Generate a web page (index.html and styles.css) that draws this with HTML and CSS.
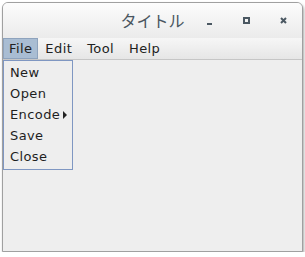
FILE: index.html
```html
<!DOCTYPE html>
<html lang="ja">
<head>
    <meta charset="UTF-8">
    <title>タイトル</title>
    <link rel="stylesheet" href="styles.css">
</head>
<body>
<div class="window">
    <div class="titlebar">
        <span class="title">タイトル</span>
        <div class="controls">
            <span class="btn"><span class="min"></span></span>
            <span class="btn"><span class="max"></span></span>
            <span class="btn"><svg width="7" height="7" viewBox="0 0 7 7"><path d="M1 1L6 6M6 1L1 6" stroke="#4b5862" stroke-width="2"/></svg></span>
        </div>
    </div>
    <div class="menubar">
        <span class="menu active">File</span>
        <span class="menu">Edit</span>
        <span class="menu">Tool</span>
        <span class="menu">Help</span>
    </div>
    <div class="content">
        <ul class="dropdown">
            <li>New</li>
            <li>Open</li>
            <li>Encode <span class="arrow"></span></li>
            <li>Save</li>
            <li>Close</li>
        </ul>
    </div>
</div>
</body>
</html>
```

FILE: styles.css
```css
body { margin: 0; background: #ffffff; font-family: "DejaVu Sans", sans-serif; }
.window { margin: 2px 0 0 2px; width: 299px; height: 248px; border: 1px solid #a0a0a0; border-radius: 6px 6px 0 0; box-shadow: 1px 2px 3px rgba(0,0,0,0.35); background: #eeeeee; display: flex; flex-direction: column; overflow: hidden; }
.titlebar { height: 35px; flex: none; background: linear-gradient(#fcfcfc, #ebebeb); display: flex; align-items: center; position: relative; }
.title { flex: 1; text-align: center; font-family: "Noto Sans CJK JP", sans-serif; font-size: 16px; color: #4a5660; padding-bottom: 2px; }
.controls { position: absolute; right: 0; top: 0; height: 35px; display: flex; align-items: center; }
.btn { width: 37px; height: 35px; display: flex; align-items: center; justify-content: center; }
.min { width: 5px; height: 2px; background: #4b5862; margin-top: 6px; }
.max { width: 3px; height: 3px; border: 2px solid #4b5862; }
.menubar { height: 21px; flex: none; background: linear-gradient(#f6f6f6, #e6e6e6); border-bottom: 1px solid #c6c6c6; display: flex; align-items: stretch; font-size: 13px; color: #222; }
.menu { padding: 0 5px; margin-right: 3px; display: flex; align-items: center; letter-spacing: 0.4px; border: 1px solid transparent; }
.menu:first-child { margin-right: 1px; }
.menu.active { background: #a9bdd3; border-color: #8ea3bd; }
.content { flex: 1; position: relative; }
.dropdown { position: absolute; left: 0; top: 0; margin: 0; padding: 1px 0 2px; list-style: none; width: 68px; border: 1px solid #7f97c2; background: #eeeeee; font-size: 13px; color: #1e1e1e; }
.dropdown li { height: 21px; line-height: 21px; padding-left: 6px; letter-spacing: 0.4px; }
.arrow { display: inline-block; width: 0; height: 0; border-left: 4px solid #222; border-top: 4px solid transparent; border-bottom: 4px solid transparent; margin-left: -2px; }
```
